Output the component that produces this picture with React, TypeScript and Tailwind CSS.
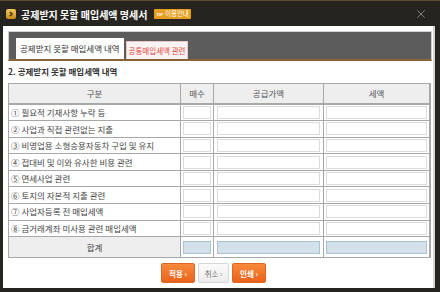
import { X } from 'lucide-react';

const rows = [
  '① 필요적 기재사항 누락 등',
  '② 사업과 직접 관련없는 지출',
  '③ 비영업용 소형승용자동차 구입 및 유지',
  '④ 접대비 및 이와 유사한 비용 관련',
  '⑤ 면세사업 관련',
  '⑥ 토지의 자본적 지출 관련',
  '⑦ 사업자등록 전 매입세액',
  '⑧ 금거래계좌 미사용 관련 매입세액',
];

const font = { fontFamily: '"Noto Sans CJK KR", "Noto Sans", sans-serif' };

const Field = ({ total }: { total?: boolean }) => (
  <div
    className={
      total
        ? 'h-[13px] border border-[#a8c2d0] bg-[#d3e2ea]'
        : 'h-[13px] border border-[#dcdcdc] bg-white'
    }
  />
);

export default function App() {
  return (
    <div style={font} className="w-[440px] h-[292px] bg-[#26241f] border-t border-[#5e4d33] flex flex-col overflow-hidden">
      {/* header */}
      <div className="h-[25px] flex items-center pl-[6px] pr-[12px] shrink-0">
        <span className="w-[10px] h-[10px] rounded-[2px] bg-gradient-to-b from-[#f4c85a] to-[#c98b18] flex items-center justify-center">
          <svg width="6" height="6" viewBox="0 0 6 6">
            <path d="M2 1 L4 3 L2 5" stroke="#3a2a10" strokeWidth="1.4" fill="none" />
          </svg>
        </span>
        <span className="ml-[5px] text-[10px] font-bold text-white pt-[1px] whitespace-nowrap">공제받지 못할 매입세액 명세서</span>
        <span className="ml-[7px] h-[10px] px-[2px] shrink-0 whitespace-nowrap bg-[#e6a020] rounded-[1px] flex items-center gap-[2px] text-white leading-none">
          <span className="text-[4px] font-bold">TIP</span>
          <span className="text-[6.5px]">이용안내</span>
        </span>
        <X size={14} strokeWidth={1.3} className="ml-auto text-[#9a9a9a]" />
      </div>

      {/* body */}
      <div className="ml-[3px] w-[432px] h-[262px] bg-white border-r-2 border-[#d4d4d4] px-[5px] pt-[5px] flex flex-col">
        {/* tabs */}
        <div className="h-[30px] bg-[#5c5c5c] border border-[#cfcfcf] border-b-2 border-b-[#8a6338] flex items-end pl-[7px] gap-[2px] w-[424px]">
          <div className="h-[21px] px-[4px] bg-white flex items-center text-[8.5px] text-[#333]">공제받지 못할 매입세액 내역</div>
          <div className="h-[18px] px-[2px] bg-[#faf3f3] flex items-center text-[7.5px] text-[#e2443c] border border-[#e6c8c8] border-b-0">공통매입세액 관련</div>
        </div>

        <div className="mt-[6px] text-[8.5px] font-bold text-[#333] leading-none">2. 공제받지 못할 매입세액 내역</div>

        {/* table */}
        <div className="mt-[7px] w-[423px] border border-[#a8a8a8] border-r-2 text-[8.5px] text-[#444]">
          <div className="grid grid-cols-[172px_33px_110px_1fr] h-[21px] bg-[#eeeeee] border-b-2 border-[#a8a8a8] text-[#555]">
            <div className="flex items-center justify-center border-r border-[#a8a8a8]">구분</div>
            <div className="flex items-center justify-center border-r border-[#a8a8a8]">매수</div>
            <div className="flex items-center justify-center border-r border-[#a8a8a8]">공급가액</div>
            <div className="flex items-center justify-center">세액</div>
          </div>
          {rows.map((r) => (
            <div key={r} className="grid grid-cols-[172px_33px_110px_1fr] h-[16.6px] border-b border-[#a8a8a8]">
              <div className="flex items-center pl-[2px] border-r border-[#a8a8a8] whitespace-nowrap">{r}</div>
              <div className="flex items-center px-[2px] border-r border-[#a8a8a8]"><div className="w-full"><Field /></div></div>
              <div className="flex items-center px-[3px] border-r border-[#a8a8a8]"><div className="w-full"><Field /></div></div>
              <div className="flex items-center px-[2px]"><div className="w-full"><Field /></div></div>
            </div>
          ))}
          <div className="grid grid-cols-[172px_33px_110px_1fr] h-[20px]">
            <div className="flex items-center justify-center bg-[#eeeeee] border-r border-[#a8a8a8]">합계</div>
            <div className="flex items-center px-[2px] border-r border-[#a8a8a8]"><div className="w-full"><Field total /></div></div>
            <div className="flex items-center px-[3px] border-r border-[#a8a8a8]"><div className="w-full"><Field total /></div></div>
            <div className="flex items-center px-[2px]"><div className="w-full"><Field total /></div></div>
          </div>
        </div>

        {/* buttons */}
        <div className="mt-[5px] flex justify-center gap-[3px] pr-[9px]">
          <button className="h-[20px] w-[34px] rounded-[2px] bg-gradient-to-b from-[#f8893a] to-[#e8621c] border border-[#e0661e] text-white text-[7.5px] font-bold leading-none">적용 ›</button>
          <button className="h-[20px] w-[31px] rounded-[2px] bg-gradient-to-b from-[#fbfbfb] to-[#ececec] border border-[#d6d6d6] text-[#777] text-[7.5px] leading-none">취소 ›</button>
          <button className="h-[20px] w-[34px] rounded-[2px] bg-gradient-to-b from-[#f8893a] to-[#e8621c] border border-[#e0661e] text-white text-[7.5px] font-bold leading-none">인쇄 ›</button>
        </div>
      </div>
    </div>
  );
}
